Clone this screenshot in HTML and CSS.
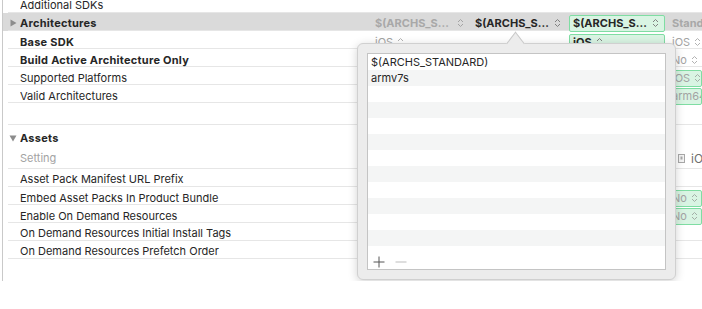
FILE: index.html
```html
<!DOCTYPE html>
<html lang="en">
<head>
  <meta charset="UTF-8">
  <meta name="viewport" content="width=device-width,initial-scale=1.0">
  <title>Build Settings</title>
  <link rel="stylesheet" href="styles.css">
</head>
<body>
  <div class="editor">
    <div class="list">
      <div class="row"><span></span><span class="name">Additional SDKs</span></div>
      <div class="row selected">
        <span class="disc"><svg width="7" height="8" viewBox="0 0 7 8"><path d="M0.5 0.5 L6.5 4 L0.5 7.5 Z" fill="#8c8c8c"/></svg></span>
        <span class="name bold">Architectures</span>
        <span class="cell c1 bold faded spread">$(ARCHS_S...<i class="chev"></i></span>
        <span class="cell c2 bold spread">$(ARCHS_S...<i class="chev"></i></span>
        <span class="cell c3"><span class="box bold spread">$(ARCHS_S...<i class="chev"></i></span></span>
        <span class="cell c4 bold faded">Standard</span>
      </div>
      <div class="row">
        <span></span><span class="name bold">Base SDK</span>
        <span class="cell c1 light">iOS<i class="chev"></i></span>
        <span class="cell c2"></span>
        <span class="cell c3"><span class="box bold">iOS<i class="chev"></i></span></span>
        <span class="cell c4 light">iOS<i class="chev"></i></span>
      </div>
      <div class="row">
        <span></span><span class="name bold">Build Active Architecture Only</span>
        <span class="cell c1"></span><span class="cell c2"></span><span class="cell c3"></span>
        <span class="cell c4 light">No<i class="chev"></i></span>
      </div>
      <div class="row">
        <span></span><span class="name">Supported Platforms</span>
        <span class="cell c1"></span><span class="cell c2"></span><span class="cell c3"></span>
        <span class="cell c4"><span class="box light">iOS<i class="chev"></i></span></span>
      </div>
      <div class="row">
        <span></span><span class="name">Valid Architectures</span>
        <span class="cell c1"></span><span class="cell c2"></span><span class="cell c3"></span>
        <span class="cell c4"><span class="box light">arm64</span></span>
      </div>
      <div class="row gap"></div>
      <div class="row section">
        <span class="disc"><svg width="8" height="7" viewBox="0 0 8 7"><path d="M0.5 0.5 L7.5 0.5 L4 6.5 Z" fill="#8c8c8c"/></svg></span>
        <span class="name bold">Assets</span>
      </div>
      <div class="row head">
        <span></span><span class="name light">Setting</span>
        <span class="cell c1"></span><span class="cell c2"></span><span class="cell c3"></span>
        <span class="cell c4 target"><svg width="9" height="9" viewBox="0 0 9 9"><rect x="1.5" y="0.5" width="6" height="8" fill="#f4f4f4" stroke="#a8a8a8"/><rect x="3.5" y="2.5" width="2" height="3" fill="#a8a8a8"/></svg>iOS</span>
      </div>
      <div class="row"><span></span><span class="name">Asset Pack Manifest URL Prefix</span></div>
      <div class="row">
        <span></span><span class="name">Embed Asset Packs In Product Bundle</span>
        <span class="cell c1"></span><span class="cell c2"></span><span class="cell c3"></span>
        <span class="cell c4"><span class="box light">No<i class="chev"></i></span></span>
      </div>
      <div class="row">
        <span></span><span class="name">Enable On Demand Resources</span>
        <span class="cell c1"></span><span class="cell c2"></span><span class="cell c3"></span>
        <span class="cell c4"><span class="box light">No<i class="chev"></i></span></span>
      </div>
      <div class="row"><span></span><span class="name">On Demand Resources Initial Install Tags</span></div>
      <div class="row"><span></span><span class="name">On Demand Resources Prefetch Order</span></div>
    </div>

    <div class="popover">
      <div class="arrow"></div>
      <div class="values">
        <div class="item">$(ARCHS_STANDARD)</div>
        <div class="item">armv7s</div>
        <div class="item"></div><div class="item"></div><div class="item"></div><div class="item"></div>
        <div class="item"></div><div class="item"></div><div class="item"></div><div class="item"></div>
        <div class="item"></div><div class="item"></div>
        <div class="tools">
          <svg width="12" height="12" viewBox="0 0 12 12"><path d="M6 0.5 V11.5 M0.5 6 H11.5" stroke="#555" stroke-width="1"/></svg>
          <svg width="12" height="12" viewBox="0 0 12 12"><path d="M0.5 6 H11.5" stroke="#bdbdbd" stroke-width="1"/></svg>
        </div>
      </div>
    </div>
  </div>
</body>
</html>
```
FILE: styles.css
```css
body
{
  margin:0;
  background-color:#fff;
  font-family:Inter,"Noto Sans",sans-serif;
  font-size:11px;
  color:#262626;
}
.editor
{
  position:relative;
  margin-left:2px;
  height:281px;
  border-left:1px solid #c9c9c9;
  overflow:hidden;
}
.list
{
  margin-top:-5px;
}
.row
{
  display:grid;
  grid-template-columns:17px 352px 98px 97px 103px 1fr;
  align-items:center;
  box-sizing:border-box;
  height:18px;
  padding-top:2px;
  background:linear-gradient(#e6e6e6,#e6e6e6) 5px 100% / calc(100% - 5px) 1px no-repeat;
  white-space:nowrap;
}
.row.selected
{
  padding-top:1px;
  background-color:#dadada;
}
.row.gap
{
  height:22px;
}
.row.section
{
  height:22px;
  padding-top:4px;
  background:none;
}
.row.head
{
  height:22px;
  padding-top:0;
}
.disc
{
  display:flex;
  justify-content:flex-end;
  padding-right:3px;
}
.name
{
  overflow:hidden;
}
.name.bold
{
  letter-spacing:0.25px;
}
.bold
{
  font-weight:700;
}
.light
{
  color:#a3a3a3;
}
.faded
{
  color:#a8a8a8;
}
.cell
{
  display:flex;
  align-items:center;
  height:18px;
  overflow:hidden;
}
.c1
{
  padding-left:3px;
  padding-right:6px;
}
.c2
{
  padding-left:5px;
  padding-right:6px;
}
.c4
{
  padding-left:2px;
}
.spread
{
  justify-content:space-between;
}
.box
{
  display:flex;
  align-items:center;
  box-sizing:border-box;
  height:17px;
  padding:0 5px 0 3px;
  background-color:#d9f4e3;
  border:1px solid #7fdda3;
  border-radius:2px;
  overflow:hidden;
}
.c3 .box
{
  margin-left:2px;
  width:96px;
}
.c4 .box
{
  width:34px;
  margin-left:-3px;
  padding-left:2px;
}
.chev
{
  display:inline-block;
  flex:none;
  width:7px;
  height:10px;
  margin-left:4px;
  background:url("data:image/svg+xml,%3Csvg xmlns='http://www.w3.org/2000/svg' width='7' height='10'%3E%3Cpath d='M1 4 L3.5 1.5 L6 4 M1 6 L3.5 8.5 L6 6' fill='none' stroke='%23808080' stroke-width='1'/%3E%3C/svg%3E") no-repeat;
}
.faded .chev,
.light .chev
{
  opacity:0.6;
}
.target
{
  padding-left:7px;
  gap:5px;
  color:#6e6e6e;
  font-size:12px;
}
.target svg
{
  flex:none;
}
.popover
{
  position:absolute;
  left:354px;
  top:43px;
  width:319px;
  height:237px;
  box-sizing:border-box;
  padding:9px;
  background-color:#ececec;
  border:1px solid #d0d0d0;
  border-radius:6px;
  box-shadow:0 2px 10px rgba(0,0,0,0.18);
}
.arrow
{
  position:absolute;
  left:150px;
  top:-8px;
  width:14px;
  height:14px;
  background-color:#ececec;
  border-top:1px solid #c8c8c8;
  border-left:1px solid #c8c8c8;
  transform:rotate(45deg) skew(8deg,8deg);
}
.values
{
  position:relative;
  height:100%;
  box-sizing:border-box;
  background-color:#fff;
  border:1px solid #c4c4c4;
}
.item
{
  height:16px;
  line-height:16px;
  padding-left:3px;
  font-size:11px;
}
.item:nth-child(even)
{
  background-color:#f4f5f5;
}
.tools
{
  display:flex;
  gap:10px;
  padding:10px 0 0 5px;
}
```
